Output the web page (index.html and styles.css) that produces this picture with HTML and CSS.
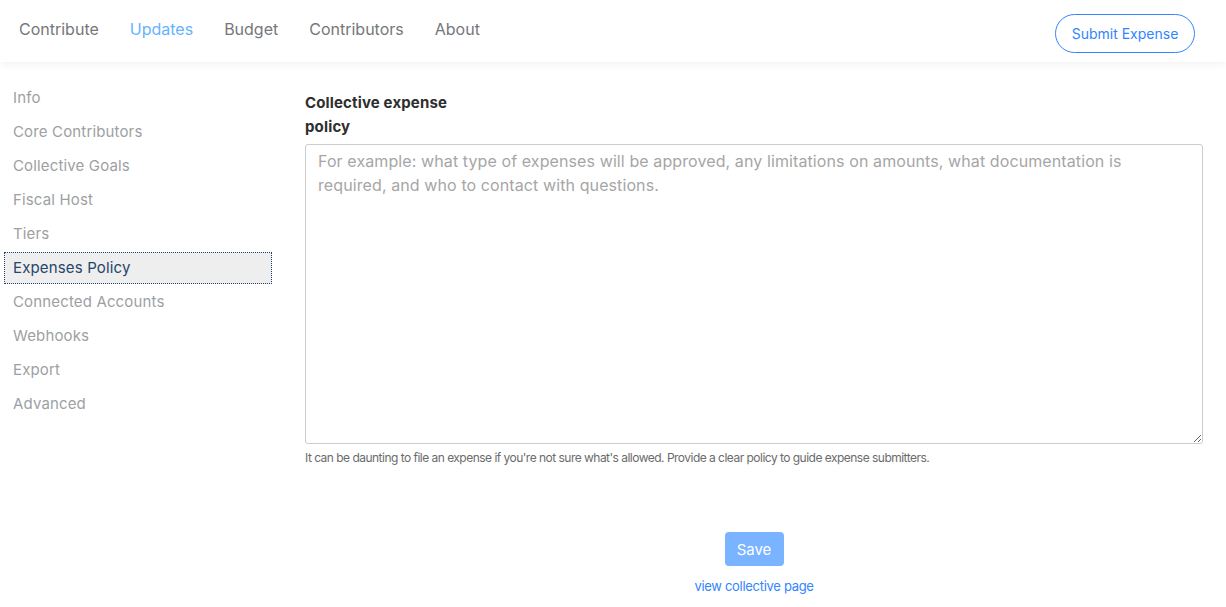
FILE: index.html
```html
<!DOCTYPE html>
<html>
<head>
<meta charset="utf-8">
<link rel="stylesheet" href="styles.css">
</head>
<body>
<header class="topbar">
  <nav class="menu">
    <a class="menu-item">Contribute</a>
    <a class="menu-item active">Updates</a>
    <a class="menu-item">Budget</a>
    <a class="menu-item">Contributors</a>
    <a class="menu-item">About</a>
  </nav>
  <button class="submit-btn">Submit Expense</button>
</header>
<div class="page">
  <aside class="sidebar">
    <a class="side-item">Info</a>
    <a class="side-item">Core Contributors</a>
    <a class="side-item">Collective Goals</a>
    <a class="side-item">Fiscal Host</a>
    <a class="side-item">Tiers</a>
    <a class="side-item selected">Expenses Policy</a>
    <a class="side-item">Connected Accounts</a>
    <a class="side-item">Webhooks</a>
    <a class="side-item">Export</a>
    <a class="side-item">Advanced</a>
  </aside>
  <main class="content">
    <label class="field-label">Collective expense policy</label>
    <textarea class="policy" placeholder="For example: what type of expenses will be approved, any limitations on amounts, what documentation is required, and who to contact with questions."></textarea>
    <p class="help">It can be daunting to file an expense if you're not sure what's allowed. Provide a clear policy to guide expense submitters.</p>
    <div class="actions">
      <button class="save-btn">Save</button>
      <a class="view-link">view collective page</a>
    </div>
  </main>
</div>
</body>
</html>
```

FILE: styles.css
```css
* { box-sizing: border-box; }
html, body { margin: 0; padding: 0; background: #fff; }
body { font-family: Inter, "Noto Sans", sans-serif; color: #313233; }
.topbar {
  height: 62px;
  display: flex;
  align-items: flex-start;
  justify-content: space-between;
  padding: 0 31px 0 19px;
  box-shadow: 0 2px 8px rgba(0,0,0,0.06);
  position: relative;
}
.menu { display: flex; gap: 31px; padding-top: 18px; }
.menu-item { font-size: 16px; line-height: 22px; color: #76777a; text-decoration: none; }
.menu-item.active { color: #66b3ff; }
.submit-btn {
  margin-top: 14px;
  height: 39px;
  width: 140px;
  border: 1px solid #3385ff;
  border-radius: 20px;
  background: #fff;
  color: #3385ff;
  font-family: Inter, sans-serif;
  font-size: 14px;
  padding: 0;
}
.page { display: flex; padding-top: 18px; }
.sidebar { width: 272px; padding-left: 4px; padding-top: 1px; display: flex; flex-direction: column; }
.side-item {
  display: block;
  height: 34px;
  line-height: 34px;
  padding-left: 9px;
  font-size: 15px;
  letter-spacing: 0.15px;
  color: #9d9fa3;
  text-decoration: none;
}
.side-item.selected {
  background: #eeeeee;
  outline: 1px dotted #1f3f6f;
  outline-offset: -1px;
  color: #26456b;
  height: 32px;
  line-height: 32px;
  margin: 1px 0;
}
.content { margin-left: 33px; width: 898px; padding-top: 11px; }
.field-label {
  display: block;
  width: 160px;
  font-size: 15px;
  font-weight: 700;
  letter-spacing: 0.15px;
  line-height: 24px;
  color: #2e2e2e;
  margin-bottom: 5px;
}
.policy {
  display: block;
  width: 898px;
  height: 300px;
  border: 1px solid #cccccc;
  border-radius: 3px;
  padding: 4px 12px;
  font-family: Inter, sans-serif;
  font-size: 16px;
  letter-spacing: 0.1px;
  line-height: 24px;
  color: #333;
  resize: vertical;
  margin: 0;
}
.policy::placeholder { color: #a6a6a6; }
.help {
  margin: 6px 0 0;
  font-size: 12px;
  line-height: 16px;
  letter-spacing: -0.52px;
  color: #6b6b6b;
}
.actions {
  display: flex;
  flex-direction: column;
  align-items: center;
  margin-top: 66px;
}
.save-btn {
  width: 59px;
  height: 34px;
  border: none;
  border-radius: 4px;
  background: #7ab3ff;
  color: #fff;
  font-family: Inter, sans-serif;
  font-size: 15px;
  padding: 0;
}
.view-link {
  margin-top: 11px;
  font-size: 13px;
  letter-spacing: -0.3px;
  line-height: 18px;
  color: #3385ff;
  text-decoration: none;
}
```
